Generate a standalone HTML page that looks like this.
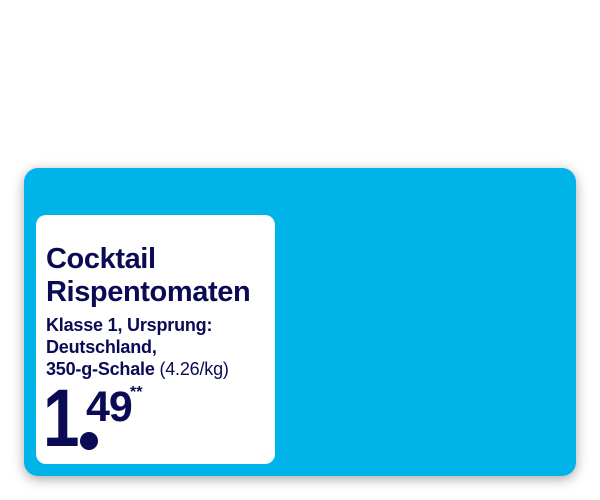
<!DOCTYPE html>
<html><head><style>
body{margin:0;width:600px;height:500px;background:#fff;position:relative;overflow:hidden;font-family:"Liberation Sans",sans-serif;color:#0a0a55}
.blue{position:absolute;left:24px;top:168px;width:552px;height:308px;background:#00b4ea;border-radius:14px;box-shadow:0 3px 12px rgba(0,0,0,.35)}
.card{position:absolute;left:36px;top:215px;width:239px;height:249px;background:#fff;border-radius:10px}
.t{position:absolute;left:46px;font-weight:bold;white-space:nowrap}
.h{font-size:29px;letter-spacing:-0.4px}
.s{font-size:18px;letter-spacing:-0.2px}
.dot{position:absolute;left:80px;top:432px;width:18px;height:18px;border-radius:50%;background:#0a0a55}
</style></head><body>
<div class="blue"></div>
<div class="card"></div>
<div class="t h" style="top:243px">Cocktail</div>
<div class="t h" style="top:276px">Rispentomaten</div>
<div class="t s" style="top:315px">Klasse 1, Ursprung:</div>
<div class="t s" style="top:337px">Deutschland,</div>
<div class="t s" style="top:359px">350-g-Schale <span style="font-weight:normal">(4.26/kg)</span></div>
<div class="t" style="top:378px;left:43px;font-size:82px;line-height:1;transform:scaleX(0.8);transform-origin:left">1</div>
<div class="dot"></div>
<div class="t" style="top:386px;left:86px;font-size:43px;letter-spacing:-1px;line-height:1">49</div>
<div class="t" style="top:384px;left:130px;font-size:16px">**</div>
</body></html>
